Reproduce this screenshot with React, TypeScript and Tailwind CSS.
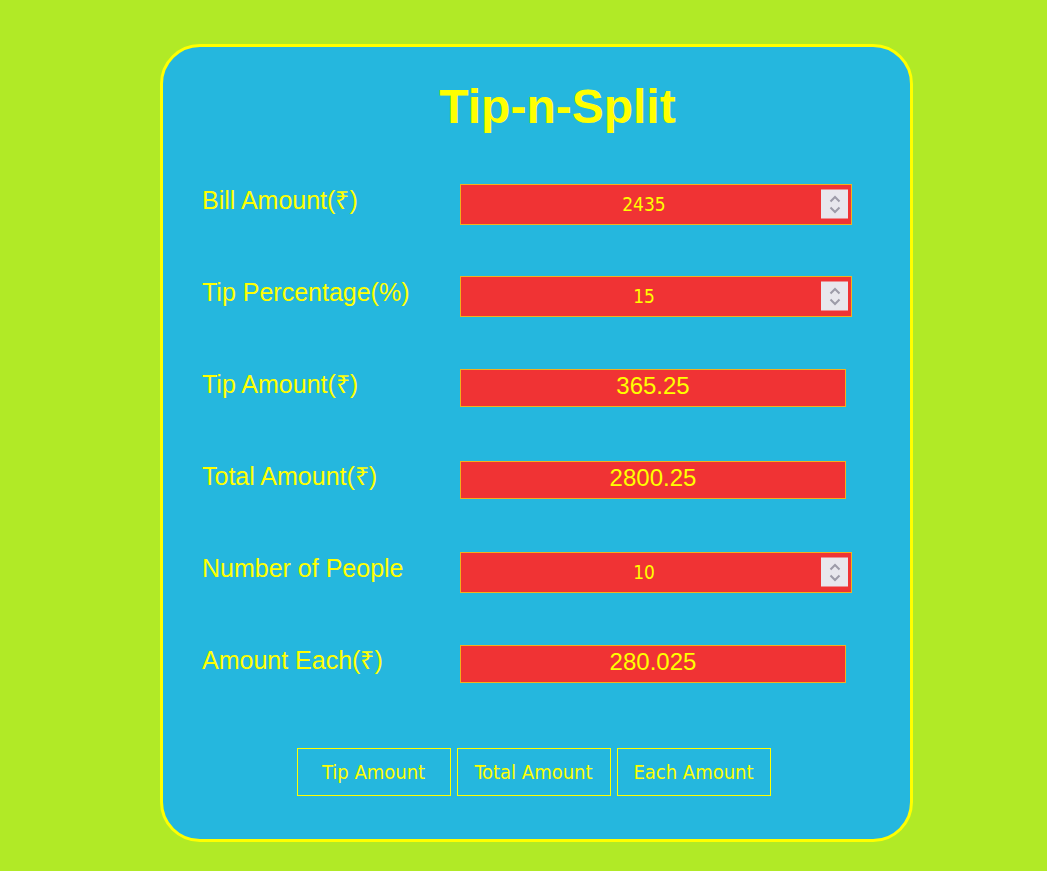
import React from "react";

function Spinner() {
  return (
    <div className="absolute right-[3px] top-1/2 -translate-y-1/2 w-[27px] h-[29px] bg-[#e8e7ed] flex flex-col items-center justify-center gap-[2px]">
      <svg width="12" height="9" viewBox="0 0 12 9"><path d="M1.5 7 L6 2.5 L10.5 7" fill="none" stroke="#9d9ba8" strokeWidth="2" /></svg>
      <svg width="12" height="9" viewBox="0 0 12 9"><path d="M1.5 2 L6 6.5 L10.5 2" fill="none" stroke="#9d9ba8" strokeWidth="2" /></svg>
    </div>
  );
}

function NumField({ value }: { value: string }) {
  return (
    <div className="relative w-[392px] h-[41px] bg-[#f03334] border border-[#f2b01e] flex items-center justify-center">
      <span className="text-[#ffff00] text-[19px] pr-[24px] mt-[1px]" style={{ fontFamily: '"DejaVu Sans Condensed", "DejaVu Sans", sans-serif' }}>{value}</span>
      <Spinner />
    </div>
  );
}

function TextField({ value }: { value: string }) {
  return (
    <div className="w-[386px] h-[38px] bg-[#f03334] border border-[#f2b01e] flex items-center justify-center">
      <span className="text-[#ffff00] text-[24px] leading-none -mt-[4px]" style={{ fontFamily: '"Liberation Sans", Arial, sans-serif' }}>{value}</span>
    </div>
  );
}

const rows: { label: string; value: string; num: boolean }[] = [
  { label: "Bill Amount(₹)", value: "2435", num: true },
  { label: "Tip Percentage(%)", value: "15", num: true },
  { label: "Tip Amount(₹)", value: "365.25", num: false },
  { label: "Total Amount(₹)", value: "2800.25", num: false },
  { label: "Number of People", value: "10", num: true },
  { label: "Amount Each(₹)", value: "280.025", num: false },
];

export default function App() {
  return (
    <div className="min-h-[871px] w-full bg-[#b1ea26] pt-[44px]" style={{ fontFamily: '"Liberation Sans", Arial, sans-serif' }}>
      <div className="ml-[160px] w-[753px] h-[798px] bg-[#25b7de] border-[3px] border-[#ffff00] rounded-[40px] flex flex-col">
        <h1 className="text-[48px] font-bold text-[#ffff00] text-center pl-[42px] mt-[36px] leading-none h-[75px]">Tip-n-Split</h1>
        <div className="flex flex-col">
          {rows.map((r) => (
            <div key={r.label} className="h-[92px] flex items-center">
              <div className="w-[258px] ml-[39px] text-[25px] leading-none text-[#ffff00] -mt-[7px]">{r.label}</div>
              {r.num ? <NumField value={r.value} /> : <TextField value={r.value} />}
            </div>
          ))}
        </div>
        <div className="flex justify-center gap-[6px] mt-[38px] pr-[6px]">
          {["Tip Amount", "Total Amount", "Each Amount"].map((b) => (
            <button key={b} className="w-[154px] h-[48px] border border-[#ffff00] text-[#ffff00] text-[20px]" style={{ fontFamily: '"DejaVu Sans Condensed", "DejaVu Sans", sans-serif' }}>{b}</button>
          ))}
        </div>
      </div>
    </div>
  );
}
